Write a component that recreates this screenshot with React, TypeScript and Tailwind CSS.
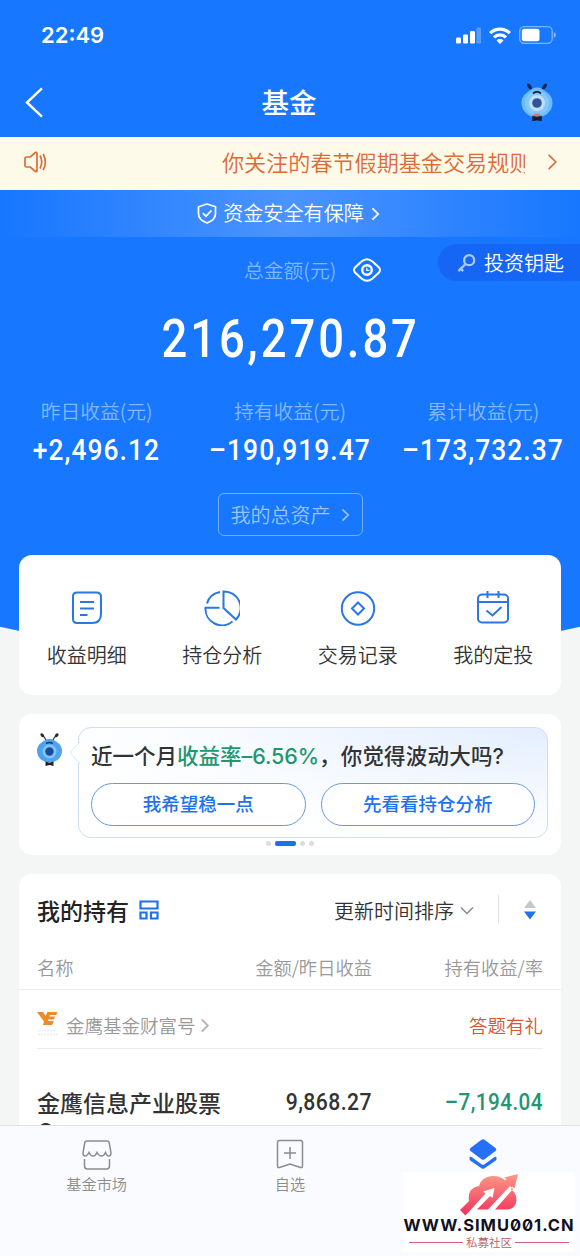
import type { ReactNode } from "react";

const AMOUNT_FONT = "font-['Roboto','Noto_Sans_CJK_SC',sans-serif]";

// 蚂蚁吉祥物
function Mascot({ className }: { className?: string }) {
    return (
        <svg viewBox="0 0 32 38" className={className} fill="none">
            <ellipse cx="8.500" cy="3.500" rx="1.700" ry="3.300" transform="rotate(-35 8.500 3.500)" fill="#14264a" />
            <ellipse cx="23.500" cy="3.500" rx="1.700" ry="3.300" transform="rotate(35 23.500 3.500)" fill="#14264a" />
            <path d="M16 4.500C20 4.500 22 6.500 26 9.500c4 3 5.500 6 5.500 10.500C31.500 28 24.500 34.500 16 34.500S.5 28 .5 20C.5 15.500 2 12.500 6 9.500 10 6.500 12 4.500 16 4.500Z" fill="#6dbcf8" />
            <ellipse cx="16" cy="20" rx="12" ry="12.500" fill="#83c8fb" />
            <circle cx="16" cy="20" r="8" fill="#c0dffa" />
            <circle cx="16" cy="20" r="4.800" fill="#2f559c" />
            <path d="M12 10.500q4-3.500 8 0" stroke="#14264a" strokeWidth="1.800" />
            <path d="M13 30.500h6V33h-6z" fill="#d9747f" />
            <path d="M11.500 33 16 34l4.500-1v5L16 37l-4.500 1Z" fill="#171d33" stroke="#171d33" strokeWidth=".6" />
        </svg>
    );
}

function MascotSmall({ className }: { className?: string }) {
    return (
        <svg viewBox="0 0 27 33" className={className} fill="none">
            <path d="M10.500 8Q9 4 6.500 2.500M16.500 8Q18 4 20.500 2.500" stroke="#2a2f3d" strokeWidth="1.200" />
            <ellipse cx="6.300" cy="2.300" rx="1.500" ry="2.200" transform="rotate(-40 6.300 2.300)" fill="#23283a" />
            <ellipse cx="20.700" cy="2.300" rx="1.500" ry="2.200" transform="rotate(40 20.700 2.300)" fill="#23283a" />
            <path d="M13.500 6c3 0 5 1.500 8 3.500 3.200 2.200 4.500 5 4.500 8.500 0 6.500-5.500 11.500-12.500 11.500S1 24.500 1 18c0-3.500 1.300-6.300 4.500-8.500C8.500 7.500 10.500 6 13.500 6Z" fill="#4ea3ef" />
            <circle cx="13.500" cy="18.500" r="7" fill="#84c2f7" />
            <circle cx="13.500" cy="18.500" r="4.200" fill="#154d9c" />
            <path d="M10 10.500q3.500-2 7 0" stroke="#18315e" strokeWidth="1.400" />
            <path d="m9.500 28.500 4 1.200 4-1.200V33l-4-1-4 1Z" fill="#20212b" />
        </svg>
    );
}

function Chevron({ className, width = 2 }: { className?: string; width?: number }) {
    return (
        <svg viewBox="0 0 10 16" className={className} fill="none" stroke="currentColor" strokeWidth={width}>
            <path d="m1.500 1.500 6.500 6.500-6.500 6.500" />
        </svg>
    );
}

function StatusBar() {
    return (
        <div className="flex h-[70px] items-center justify-between pr-[24px] pl-[41px]">
            <span className="font-['Inter',sans-serif] text-[22px] font-semibold">22:49</span>
            <div className="flex items-center gap-[8px]">
                <svg viewBox="0 0 26 17" className="h-[17px] w-[26px]" fill="#fff">
                    <rect x="1" y="10.500" width="5" height="6" rx="1.200" />
                    <rect x="8" y="7.500" width="5" height="9" rx="1.200" />
                    <rect x="15" y="4" width="5" height="12.500" rx="1.200" />
                    <rect x="21.500" y="0.500" width="4.500" height="16" rx="1.200" opacity=".28" />
                </svg>
                <svg viewBox="0 0 22 17" className="h-[17px] w-[22px]" fill="none" stroke="#fff" strokeWidth="3.200">
                    <path d="M1.200 6.200a14 14 0 0 1 19.600 0" />
                    <path d="M5 10.300a8.600 8.600 0 0 1 12 0" />
                    <path d="m11 17-3.500-3.600a5 5 0 0 1 7 0Z" fill="#fff" stroke="none" />
                </svg>
                <svg viewBox="0 0 37 18" className="h-[18px] w-[37px]" fill="none">
                    <rect x=".7" y=".7" width="32.500" height="16.600" rx="4.500" stroke="#fff" strokeOpacity=".45" strokeWidth="1.300" />
                    <rect x="2.800" y="2.800" width="17.700" height="12.400" rx="2.500" fill="#fff" />
                    <path d="M34.800 6v6q2-1 2-3t-2-3Z" fill="#fff" opacity=".5" />
                </svg>
            </div>
        </div>
    );
}

function NoticeBar() {
    return (
        <div className="flex h-[53px] items-center bg-[#fdfaea] pr-[22px] pb-[3px] pl-[24px] text-[#dc6b37]">
            <svg viewBox="0 0 24 22" className="h-[22px] w-[24px]" fill="none" stroke="currentColor" strokeWidth="1.700">
                <path d="M2.500 6h3.800l5-4.500q1.700-.5 1.700 1v17q0 1.500-1.700 1l-5-4.500H2.500Q1 16 1 14.500v-7Q1 6 2.500 6Z" />
                <path d="M16 4.500q3.500 6.500 0 13M19.200 2.800q4.300 8.200 0 16.400" />
            </svg>
            <div className="ml-[174px] w-[303px] overflow-hidden text-[22.100px] whitespace-nowrap">你关注的春节假期基金交易规则</div>
            <Chevron className="ml-auto h-[18px] w-[11px]" width={1.5} />
        </div>
    );
}

const stats = [
    { label: "昨日收益(元)", value: "+2,496.12" },
    { label: "持有收益(元)", value: "–190,919.47" },
    { label: "累计收益(元)", value: "–173,732.37" },
];

function Hero() {
    return (
        <section className="h-[659px] shrink-0 bg-[#1777ff] text-white [clip-path:circle(1320px_at_50%_-661px)]">
            <StatusBar />

            <div className="flex h-[67px] items-center justify-between pr-[27px] pb-[3px] pl-[25px]">
                <svg viewBox="0 0 19 32" className="h-[31px] w-[32px]" fill="none" stroke="#fff" strokeWidth="2.500" preserveAspectRatio="xMinYMid">
                    <path d="M17.500 1.500 2 16l15.500 14.500" />
                </svg>
                <h1 className="text-[27.500px] leading-none font-medium">基金</h1>
                <Mascot className="h-[38px] w-[32px]" />
            </div>

            <NoticeBar />

            <div className="flex h-[47px] items-center justify-center bg-[linear-gradient(90deg,#1777ff_0%,#4b94ff_50%,#1777ff_100%)] pr-[3px] text-[20.100px]">
                <svg viewBox="0 0 20 21" className="mr-[6px] h-[21px] w-[20px]" fill="none" stroke="#fff" strokeWidth="1.700">
                    <path d="M10 1 18.500 3.800V11c0 4.500-3.500 7-8.500 9-5-2-8.500-4.500-8.500-9V3.800Z" strokeLinejoin="round" />
                    <path d="m5.800 10.200 3.200 3 5.500-5.700" />
                </svg>
                资金安全有保障
                <Chevron className="ml-[7px] h-[14px] w-[9px]" />
            </div>

            <div className="relative flex h-[67px] items-center pb-[1px] pl-[244px]">
                <span className="w-[109px] text-[19.800px] text-[#83b8ff]">总金额(元)</span>
                <svg viewBox="0 0 28 24" className="h-[24px] w-[28px]" fill="none" stroke="#fff" strokeWidth="2">
                    <path d="M2 9.500 8.500 3.500Q14-1 19.500 3.500l6.500 6q2 2.500 0 5l-6.500 6Q14 25 8.500 20.500L2 14.500Q0 12 2 9.500Z" />
                    <circle cx="14" cy="12" r="4.800" strokeWidth="2.400" />
                    <path d="M13.800 9.800v2.600h2.600" strokeWidth="1.200" />
                </svg>
                <div className="absolute top-[7px] right-0 flex h-[37px] w-[142px] items-center rounded-l-full bg-[#1566f5] pl-[19px] text-[20px]">
                    <svg viewBox="0 0 20 20" className="mr-[8px] h-[20px] w-[19px]" fill="none" stroke="#a9ccff" strokeWidth="2.400">
                        <circle cx="12.800" cy="7" r="5.300" />
                        <path d="M9 11 1.500 18.500M3 15l3.500 3.500" />
                    </svg>
                    投资钥匙
                </div>
            </div>

            <div className={`flex h-[68px] items-center justify-center text-[54px] leading-none font-medium tracking-[3.500px] ${AMOUNT_FONT}`}>
                <span className="inline-block origin-center scale-x-[0.84] pt-[1px] pl-[2px]">216,270.87</span>
            </div>

            <div className="grid grid-cols-3 pt-[24px] text-center">
                {stats.map((s) => (
                    <div key={s.label} className="flex flex-col items-center">
                        <div className="h-[30px] text-[19.800px] leading-[30px] text-[#83b8ff]">{s.label}</div>
                        <div className={`h-[46px] scale-x-[0.88] text-[30px] leading-[47px] font-medium tracking-[1.200px] whitespace-nowrap ${AMOUNT_FONT}`}>
                            {s.value}
                        </div>
                    </div>
                ))}
            </div>

            <button className="mx-auto mt-[21px] flex h-[43px] w-[145px] items-center justify-center rounded-[6px] border border-[#74afff] text-[20px] text-[#97c4ff]">
                我的总资产
                <Chevron className="ml-[10px] h-[14px] w-[9px]" />
            </button>
        </section>
    );
}

const shortcuts: { label: string; icon: ReactNode }[] = [
    {
        label: "收益明细",
        icon: (
            <>
                <path d="M8 2.500h19.500q4.500 0 4.500 4.500v17q0 9-9 9H8q-4 0-4-4V6.500q0-4 4-4Z" />
                <path d="M11 12h14M11 18.500h14M11 25h7.500" />
            </>
        ),
    },
    {
        label: "持仓分析",
        icon: (
            <path d="M19.500 1.500a16.500 16.500 0 0 1 12.500 28L19.500 18ZM16 2A16.500 16.500 0 0 0 3 13.500M15.500 17.800H1.500a16.500 16.500 0 0 0 27 13.700" />
        ),
    },
    {
        label: "交易记录",
        icon: (
            <>
                <circle cx="18" cy="18.500" r="16.200" />
                <path d="m18 12.500 6 6-6 6-6-6Z" />
            </>
        ),
    },
    {
        label: "我的定投",
        icon: (
            <>
                <rect x="3" y="4.500" width="30" height="28" rx="4" />
                <path d="M3 12h30M12.500 1v7M23.500 1v7M11.500 20.500l6 5 9-8.500" />
            </>
        ),
    },
];

function Shortcuts() {
    return (
        <section className="relative mx-[19px] mt-[-104px] grid h-[140px] shrink-0 grid-cols-4 rounded-[13px] bg-white pt-[35px]">
            {shortcuts.map((s) => (
                <div key={s.label} className="flex flex-col items-center gap-[14px]">
                    <svg viewBox="0 0 36 36" className="h-[36px] w-[36px]" fill="none" stroke="#2b76e5" strokeWidth="2">
                        {s.icon}
                    </svg>
                    <span className="text-[20px] leading-[30px] text-[#333]">{s.label}</span>
                </div>
            ))}
        </section>
    );
}

function AdviceCard() {
    return (
        <section className="mx-[19px] mt-[19px] h-[141px] shrink-0 rounded-[13px] bg-white pt-[13px]">
            <div className="flex pr-[13px] pl-[17px]">
                <MascotSmall className="mt-[6px] h-[33px] w-[27px]" />
                <div className="relative ml-[15px] h-[111px] flex-1 rounded-[13px] border border-[#cfdff3] bg-[radial-gradient(ellipse_at_100%_0%,#e3eeff_0%,#f8fbff_50%,#fff_75%)] px-[12px] pt-[11px]">
                    {/* 气泡箭头 */}
                    <svg viewBox="0 0 10 22" className="absolute top-[14px] left-[-9px] h-[22px] w-[10px]" fill="#fff">
                        <path d="M10 0 1.500 8.500q-1.500 2 0 4L10 22" stroke="#dbe7f6" />
                    </svg>
                    <p className="h-[34px] font-['Inter','Noto_Sans_CJK_SC',sans-serif] text-[21.500px] leading-[34px] font-medium whitespace-nowrap text-[#333]">
                        近一个月<span className="text-[#22966f]">收益率<span className="tracking-[-0.100px]">–6.56%</span></span>
                        <span className="tracking-[0.200px]">，你觉得波动大吗?</span>
                    </p>
                    <div className="mt-[10px] flex gap-[15px] text-[18.500px] font-medium text-[#1e71f0]">
                        <button className="h-[43px] flex-1 rounded-full border border-[#6699e0] bg-white pb-[2px]">我希望稳一点</button>
                        <button className="h-[43px] flex-1 rounded-full border border-[#6699e0] bg-white pb-[2px]">先看看持仓分析</button>
                    </div>
                </div>
            </div>
            <div className="mt-[3px] flex justify-center gap-[4px]">
                <i className="h-[5px] w-[5px] rounded-full bg-[#dcdde0]" />
                <i className="h-[5px] w-[21px] rounded-[2px] bg-[#1c70ee]" />
                <i className="h-[5px] w-[5px] rounded-full bg-[#dcdde0]" />
                <i className="h-[5px] w-[5px] rounded-full bg-[#dcdde0]" />
            </div>
        </section>
    );
}

function Holdings() {
    return (
        <section className="mx-[19px] mt-[19px] h-[300px] shrink-0 rounded-t-[13px] bg-white">
            <div className="flex h-[74px] items-center pr-[25px] pl-[18px]">
                <h2 className="pb-[2px] text-[23px] font-medium text-[#222]">我的持有</h2>
                <svg viewBox="0 0 20 20" className="mt-[-2px] ml-[10px] h-[20px] w-[20px]" fill="none" stroke="#1f70ec" strokeWidth="2.200">
                    <path d="M1.500 1.500h17v7h-17zM1.500 12.500h6v6h-6zM12 12.500h6.500v6H12z" />
                </svg>
                <span className="ml-auto text-[20px] text-[#333]">更新时间排序</span>
                <svg viewBox="0 0 14 10" className="ml-[6px] h-[10px] w-[14px]" fill="none" stroke="#888" strokeWidth="1.500">
                    <path d="m1 1.500 6 6 6-6" />
                </svg>
                <i className="mt-[-4px] ml-[24px] h-[28px] w-px bg-[#e2e2e2]" />
                <svg viewBox="0 0 12 20" className="mt-[-2px] ml-[25px] h-[20px] w-[12px]">
                    <path d="m6 0 6 8H0Z" fill="#c7c7c7" />
                    <path d="M6 19.500 0 11.500h12Z" fill="#1f70ec" />
                </svg>
            </div>

            <div className="grid h-[42px] grid-cols-[130px_205px_171px] items-center border-b border-[#ececec] pb-[2px] pl-[18px] text-[18.300px] text-[#999]">
                <span>名称</span>
                <span className="text-right">金额/昨日收益</span>
                <span className="text-right">持有收益/率</span>
            </div>

            <div className="mx-[18px] flex h-[59px] items-center border-b border-[#ececec] pt-[13px] text-[18.500px]">
                <svg viewBox="0 0 22 26" className="mt-[-4px] h-[26px] w-[22px]">
                    <path d="M0 1h6l2.500 4L10.500 1h10l-1.300 3H13l-.6 1.500h5.600L17 8.500h-5.600l-.5 1.500h6L15 14H6L7 10.500Z" fill="#f08a24" />
                    <path d="M1 19.500h18M1 23.500h20" stroke="#eef2f7" strokeWidth="2" strokeDasharray="2 1" />
                </svg>
                <span className="ml-[7px] text-[#999]">金鹰基金财富号</span>
                <Chevron className="ml-[4px] h-[15px] w-[10px] text-[#b3b3b3]" />
                <span className="ml-auto text-[#d8552d]">答题有礼</span>
            </div>

            <div className="grid grid-cols-[187px_148px_171px] pt-[39px] pl-[18px] leading-[28px] font-medium">
                <span className="text-[23px] text-[#333]">金鹰信息产业股票C</span>
                <span className={`origin-right scale-x-[0.9] text-right text-[23.500px] tracking-[0.500px] text-[#333] ${AMOUNT_FONT}`}>9,868.27</span>
                <span className={`origin-right scale-x-[0.88] text-right text-[23.500px] tracking-[0.500px] text-[#22966f] ${AMOUNT_FONT}`}>–7,194.04</span>
            </div>
        </section>
    );
}

function Watermark() {
    return (
        <div className="absolute top-[46px] right-[5px] flex h-[80px] w-[172px] flex-col items-center bg-white pt-[2px]">
            <svg viewBox="0 0 58 42" className="h-[42px] w-[58px]">
                <defs>
                    <linearGradient id="cloud" x1="0" y1="0" x2="0" y2="1">
                        <stop offset="0" stopColor="#fb9a86" />
                        <stop offset="1" stopColor="#f2315a" />
                    </linearGradient>
                </defs>
                <path d="M9 27Q7 14 19 12 22 2 33 2q8 0 12 4.500l1.500-1.500-2-1.500L58 0l-3.500 14.500-2-2-1.500 3q6 4 5.500 11-1 9-10.500 9H35L53 15l-3-3-22 23.500H17L30 22l2.500 2 2-10-11.500 3.500 2.500 2L5.500 41.500 0 36Z" fill="url(#cloud)" />
            </svg>
            <div className="mt-[-1px] font-['Inter',sans-serif] text-[16.500px] leading-[20px] font-bold tracking-[0.950px] whitespace-nowrap text-[#12101d] [font-feature-settings:'zero']">
                WWW.SIMU001.CN
            </div>
            <div className="flex w-[160px] items-center gap-[3px] text-[11.500px] leading-[14px] text-[#bd5a61]">
                <i className="h-px flex-1 bg-[#d0666c]" />
                私募社区
                <i className="h-px flex-1 bg-[#d0666c]" />
            </div>
        </div>
    );
}

function TabBar() {
    return (
        <nav className="relative grid h-[131px] shrink-0 grid-cols-3 border-t border-[#e0e2e6] bg-[#fafbfe] text-[15.200px] text-[#8c8c8c]">
            <div className="flex flex-col items-center pt-[14px]">
                <svg viewBox="0 0 30 30" className="h-[30px] w-[30px]" fill="none" stroke="#8c8c8c" strokeWidth="1.500">
                    <path d="M5 1h20q2 0 2.300 2L29 13q0 3-2.300 3-1.700 0-3.200-3.500Q22 16 19.500 16T15 12.500Q13.500 16 11 16t-4-3.500Q5 16 3.300 16 1 16 1 13L2.700 3Q3 1 5 1Z" />
                    <path d="M2.500 19v7q0 3 3 3h19q3 0 3-3v-7" />
                </svg>
                <span className="mt-[2px] leading-[22px]">基金市场</span>
            </div>
            <div className="flex flex-col items-center pt-[13px]">
                <svg viewBox="0 0 30 30" className="h-[30px] w-[30px]" fill="none" stroke="#8c8c8c" strokeWidth="1.500">
                    <path d="M4.500 1.500h21q2 0 2 2V27q0 2-2 1.500L15 25 4.500 28.500q-2 .5-2-1.500V3.500q0-2 2-2ZM15 8v12M9 14h12" />
                </svg>
                <span className="mt-[3px] leading-[22px]">自选</span>
            </div>
            <div className="flex flex-col items-center pt-[13px]">
                <svg viewBox="0 0 28 30" className="h-[30px] w-[28px]" fill="#2670f8">
                    <path d="M12.500.700q1.500-1 3 0l11 8.300q1.500 1.500 0 3l-11 8.300q-1.500 1-3 0L1.500 12Q0 10.500 1.500 9Z" />
                    <path d="M.5 19q0-2 2-1l10 7.200q1.500 1 3 0L25.500 18q2-1 2 1v1q0 1-1 1.800l-11 7.500q-1.500 1-3 0l-11-7.500q-1-.8-1-1.800Z" />
                </svg>
            </div>
            <Watermark />
        </nav>
    );
}

export default function App() {
    return (
        <div className="flex h-[1256px] w-[580px] flex-col overflow-hidden bg-[#f4f6f6] font-['Noto_Sans_CJK_SC',sans-serif] font-[350]">
            <main className="flex min-h-0 flex-1 flex-col overflow-hidden">
                <Hero />
                <Shortcuts />
                <AdviceCard />
                <Holdings />
            </main>
            <TabBar />
        </div>
    );
}
